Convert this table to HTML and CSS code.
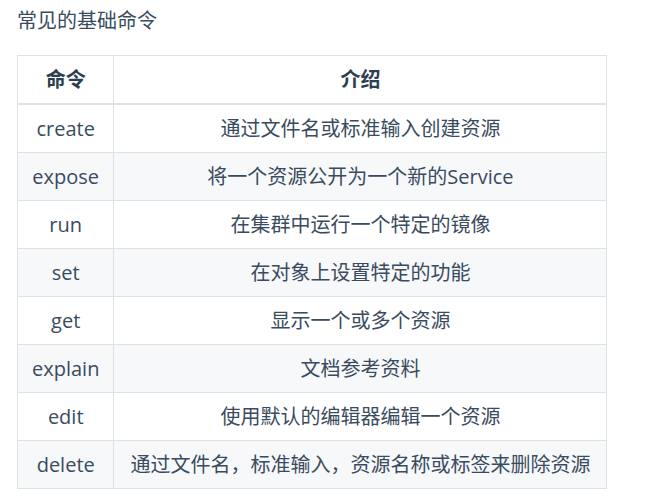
FILE: index.html
```html
<!DOCTYPE html>
<html lang="zh">
<head>
<meta charset="utf-8">
<link rel="stylesheet" href="styles.css">
</head>
<body>
<div class="page">
  <p class="title">常见的基础命令</p>
  <table class="cmd-table">
    <thead>
      <tr><th class="col-cmd">命令</th><th>介绍</th></tr>
    </thead>
    <tbody>
      <tr><td class="col-cmd">create</td><td>通过文件名或标准输入创建资源</td></tr>
      <tr><td class="col-cmd">expose</td><td>将一个资源公开为一个新的Service</td></tr>
      <tr><td class="col-cmd">run</td><td>在集群中运行一个特定的镜像</td></tr>
      <tr><td class="col-cmd">set</td><td>在对象上设置特定的功能</td></tr>
      <tr><td class="col-cmd">get</td><td>显示一个或多个资源</td></tr>
      <tr><td class="col-cmd">explain</td><td>文档参考资料</td></tr>
      <tr><td class="col-cmd">edit</td><td>使用默认的编辑器编辑一个资源</td></tr>
      <tr><td class="col-cmd">delete</td><td>通过文件名，标准输入，资源名称或标签来删除资源</td></tr>
    </tbody>
  </table>
</div>
</body>
</html>
```
FILE: styles.css
```css
html, body {
  margin: 0;
  padding: 0;
  background: #ffffff;
}
body {
  font-family: "Open Sans", "Noto Sans CJK SC", sans-serif;
  font-size: 20px;
  color: #3a4b5e;
}
.page {
  padding: 5px 17px 0 17px;
}
.title {
  margin: 0 0 18px 0;
  line-height: 32px;
  font-size: 20px;
  color: #3a4b5e;
}
.cmd-table {
  border-collapse: collapse;
}
.cmd-table th,
.cmd-table td {
  border: 1px solid #dfe2e5;
  padding: 8px 16px 7px 16px;
  line-height: 32px;
  text-align: center;
  white-space: nowrap;
}
.cmd-table .col-cmd {
  padding-left: 14px;
  padding-right: 14px;
}
.cmd-table th {
  font-weight: 700;
  color: #2c3e50;
  border-bottom: 2px solid #dfe2e5;
}
.cmd-table tbody tr:nth-child(even) {
  background: #f6f8fa;
}
```
